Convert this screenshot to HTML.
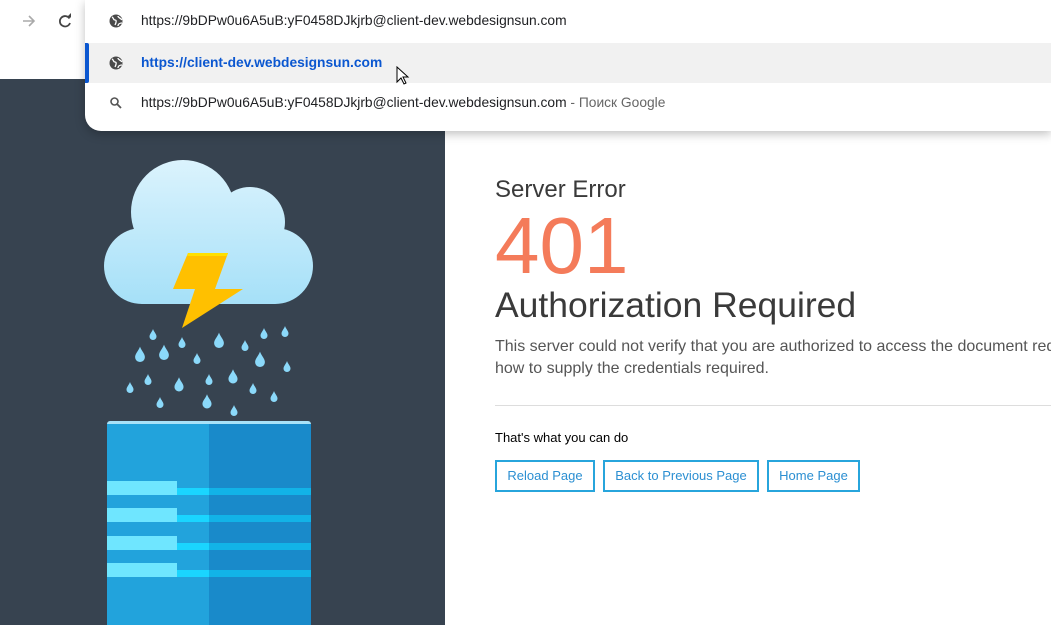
<!DOCTYPE html>
<html><head><meta charset="utf-8"><style>
*{margin:0;padding:0;box-sizing:border-box}
html,body{width:1051px;height:625px;overflow:hidden}
body{background:#fff;font-family:"Liberation Sans",Arial,sans-serif;position:relative}
.dark{position:absolute;left:0;top:79px;width:445px;height:546px;background:#374350}
.dd{position:absolute;left:85px;top:0;width:966px;height:131px;background:#fff;border-radius:0 0 0 16px;box-shadow:0 3px 10px rgba(0,0,0,.25);font-family:"Liberation Sans","DejaVu Sans",sans-serif;font-size:13.8px;color:#202124}
.row{position:absolute;left:0;width:100%;height:40px;line-height:40px}
.row span{position:absolute;left:56px}
.ic{position:absolute;left:24px;top:13px}
.hl{background:#f1f1f1}
.bar{position:absolute;left:0;top:43px;width:4px;height:40px;background:#0b57d0;border-radius:0 2px 2px 0}
.r{position:absolute;left:495px;color:#333}
.clip{position:absolute;left:0;top:0;width:1051px;height:625px;overflow:hidden}
.btn{position:absolute;top:460px;height:32px;border:2px solid #27a5dc;color:#2b8fd2;font-size:13px;line-height:28px;text-align:center}
</style></head><body>
<svg style="position:absolute;left:20px;top:12px" width="18" height="18" viewBox="0 0 18 18"><path d="M3 9h11M9 4l5 5-5 5" stroke="#aaa" stroke-width="1.6" fill="none"/></svg>
<svg style="position:absolute;left:56px;top:12px" width="18" height="18" viewBox="0 0 18 18"><path d="M13.5 6.5A5.2 5.2 0 1 0 14 11" stroke="#444" stroke-width="1.8" fill="none"/><path d="M10.5 5.5h4.5V1z" fill="#444"/></svg>
<div class="dark"></div>
<div class="dd">
 <div class="row" style="top:1px"><svg class="ic" width="14" height="14" viewBox="0 0 14 14"><circle cx="7" cy="7" r="6.5" fill="#4a4a4a"/><path d="M3 3c2 1 1 3 3 3s1 3 0 5M9 2c0 2 3 2 4 4M9 12c0-2 2-3 4-3" stroke="#fff" stroke-width="1.3" fill="none"/></svg><span>https://9bDPw0u6A5uB:yF0458DJkjrb@client-dev.webdesignsun.com</span></div>
 <div class="row hl" style="top:43px"><svg class="ic" width="14" height="14" viewBox="0 0 14 14"><circle cx="7" cy="7" r="6.5" fill="#4a4a4a"/><path d="M3 3c2 1 1 3 3 3s1 3 0 5M9 2c0 2 3 2 4 4M9 12c0-2 2-3 4-3" stroke="#fff" stroke-width="1.3" fill="none"/></svg><span style="color:#0b57d0;font-weight:bold">https://client-dev.webdesignsun.com</span></div>
 <div class="bar"></div>
 <div class="row" style="top:83px"><svg class="ic" width="14" height="14" viewBox="0 0 14 14"><circle cx="5.5" cy="5.5" r="3.5" stroke="#555" stroke-width="1.6" fill="none"/><path d="M8 8l4 4" stroke="#555" stroke-width="1.8"/></svg><span>https://9bDPw0u6A5uB:yF0458DJkjrb@client-dev.webdesignsun.com <span style="position:static;color:#666">- Поиск Google</span></span></div>
</div>
<svg style="position:absolute;left:396px;top:66px" width="14" height="20" viewBox="0 0 14 20"><path d="M1 1v15l4-4 3 6 2-1-3-6h5z" fill="#fff" stroke="#000" stroke-width="1"/></svg>
<svg style="position:absolute;left:0;top:131px" width="445" height="494" viewBox="0 131 445 494">
<defs><linearGradient id="c" gradientUnits="userSpaceOnUse" x1="0" y1="160" x2="0" y2="305"><stop offset="0" stop-color="#dbf3fd"/><stop offset="1" stop-color="#a5e0f8"/></linearGradient>
<path id="d" d="M0-6C1-3 3.5-1 3.5 1.5A3.5 3.5 0 0 1-3.5 1.5C-3.5-1-1-3 0-6z"/></defs>
<g fill="url(#c)"><circle cx="183" cy="212" r="52"/><circle cx="250" cy="222" r="35"/><circle cx="142" cy="266" r="38"/><circle cx="275" cy="266" r="38"/><rect x="142" y="230" width="133" height="74"/></g>
<polygon points="188,253 228,253 215,289 243,289 182,328 195,289 173,289" fill="#ffc000"/>
<polygon points="188,253 228,253 227,256 187,256" fill="#ffe000"/>
<g fill="#8bd9fa">
<use href="#d" x="153" y="335"/><use href="#d" x="182" y="343"/><use href="#d" x="219" y="341" transform="translate(219 341) scale(1.4) translate(-219 -341)"/><use href="#d" x="245" y="346"/><use href="#d" x="264" y="334"/><use href="#d" x="285" y="332"/>
<use href="#d" x="140" y="355" transform="translate(140 355) scale(1.4) translate(-140 -355)"/><use href="#d" x="164" y="353" transform="translate(164 353) scale(1.4) translate(-164 -353)"/><use href="#d" x="197" y="359"/><use href="#d" x="260" y="360" transform="translate(260 360) scale(1.4) translate(-260 -360)"/><use href="#d" x="287" y="367"/>
<use href="#d" x="148" y="380"/><use href="#d" x="179" y="385" transform="translate(179 385) scale(1.3) translate(-179 -385)"/><use href="#d" x="209" y="380"/><use href="#d" x="233" y="377" transform="translate(233 377) scale(1.3) translate(-233 -377)"/><use href="#d" x="253" y="389"/><use href="#d" x="274" y="397"/>
<use href="#d" x="130" y="388"/><use href="#d" x="160" y="403"/><use href="#d" x="207" y="402" transform="translate(207 402) scale(1.3) translate(-207 -402)"/><use href="#d" x="234" y="411"/>
</g>
<rect x="107" y="421" width="204" height="210" rx="3" fill="#a8e2f8"/>
<rect x="107" y="424" width="102" height="201" fill="#22a3dc"/>
<rect x="209" y="424" width="102" height="201" fill="#198aca"/>
<rect x="107" y="481" width="70" height="14" fill="#6fe6ff"/><rect x="177" y="488" width="32" height="7" fill="#1ad5ff"/><rect x="209" y="488" width="102" height="7" fill="#12b3e7"/>
<rect x="107" y="508" width="70" height="14" fill="#6fe6ff"/><rect x="177" y="515" width="32" height="7" fill="#1ad5ff"/><rect x="209" y="515" width="102" height="7" fill="#12b3e7"/>
<rect x="107" y="536" width="70" height="14" fill="#6fe6ff"/><rect x="177" y="543" width="32" height="7" fill="#1ad5ff"/><rect x="209" y="543" width="102" height="7" fill="#12b3e7"/>
<rect x="107" y="563" width="70" height="14" fill="#6fe6ff"/><rect x="177" y="570" width="32" height="7" fill="#1ad5ff"/><rect x="209" y="570" width="102" height="7" fill="#12b3e7"/>
</svg>
<div class="clip">
<div class="r" style="top:176px;font-size:24px;color:#3a3a3a">Server Error</div>
<div class="r" style="top:204px;font-size:80px;line-height:84px;color:#f47b5a">401</div>
<div class="r" style="top:285px;font-size:35.5px;color:#3a3a3a;white-space:nowrap">Authorization Required</div>
<div class="r" style="top:336px;font-size:16px;line-height:22px;color:#555;white-space:nowrap">This server could not verify that you are authorized to access the document requested.<br>how to supply the credentials required.</div>
<div style="position:absolute;left:495px;top:405px;width:556px;height:1px;background:#ddd"></div>
</div>
<div class="r" style="top:430px;font-size:13px;color:#000">That's what you can do</div>
<div class="btn" style="left:495px;width:100px">Reload Page</div>
<div class="btn" style="left:603px;width:156px">Back to Previous Page</div>
<div class="btn" style="left:767px;width:93px">Home Page</div>
</body></html>
